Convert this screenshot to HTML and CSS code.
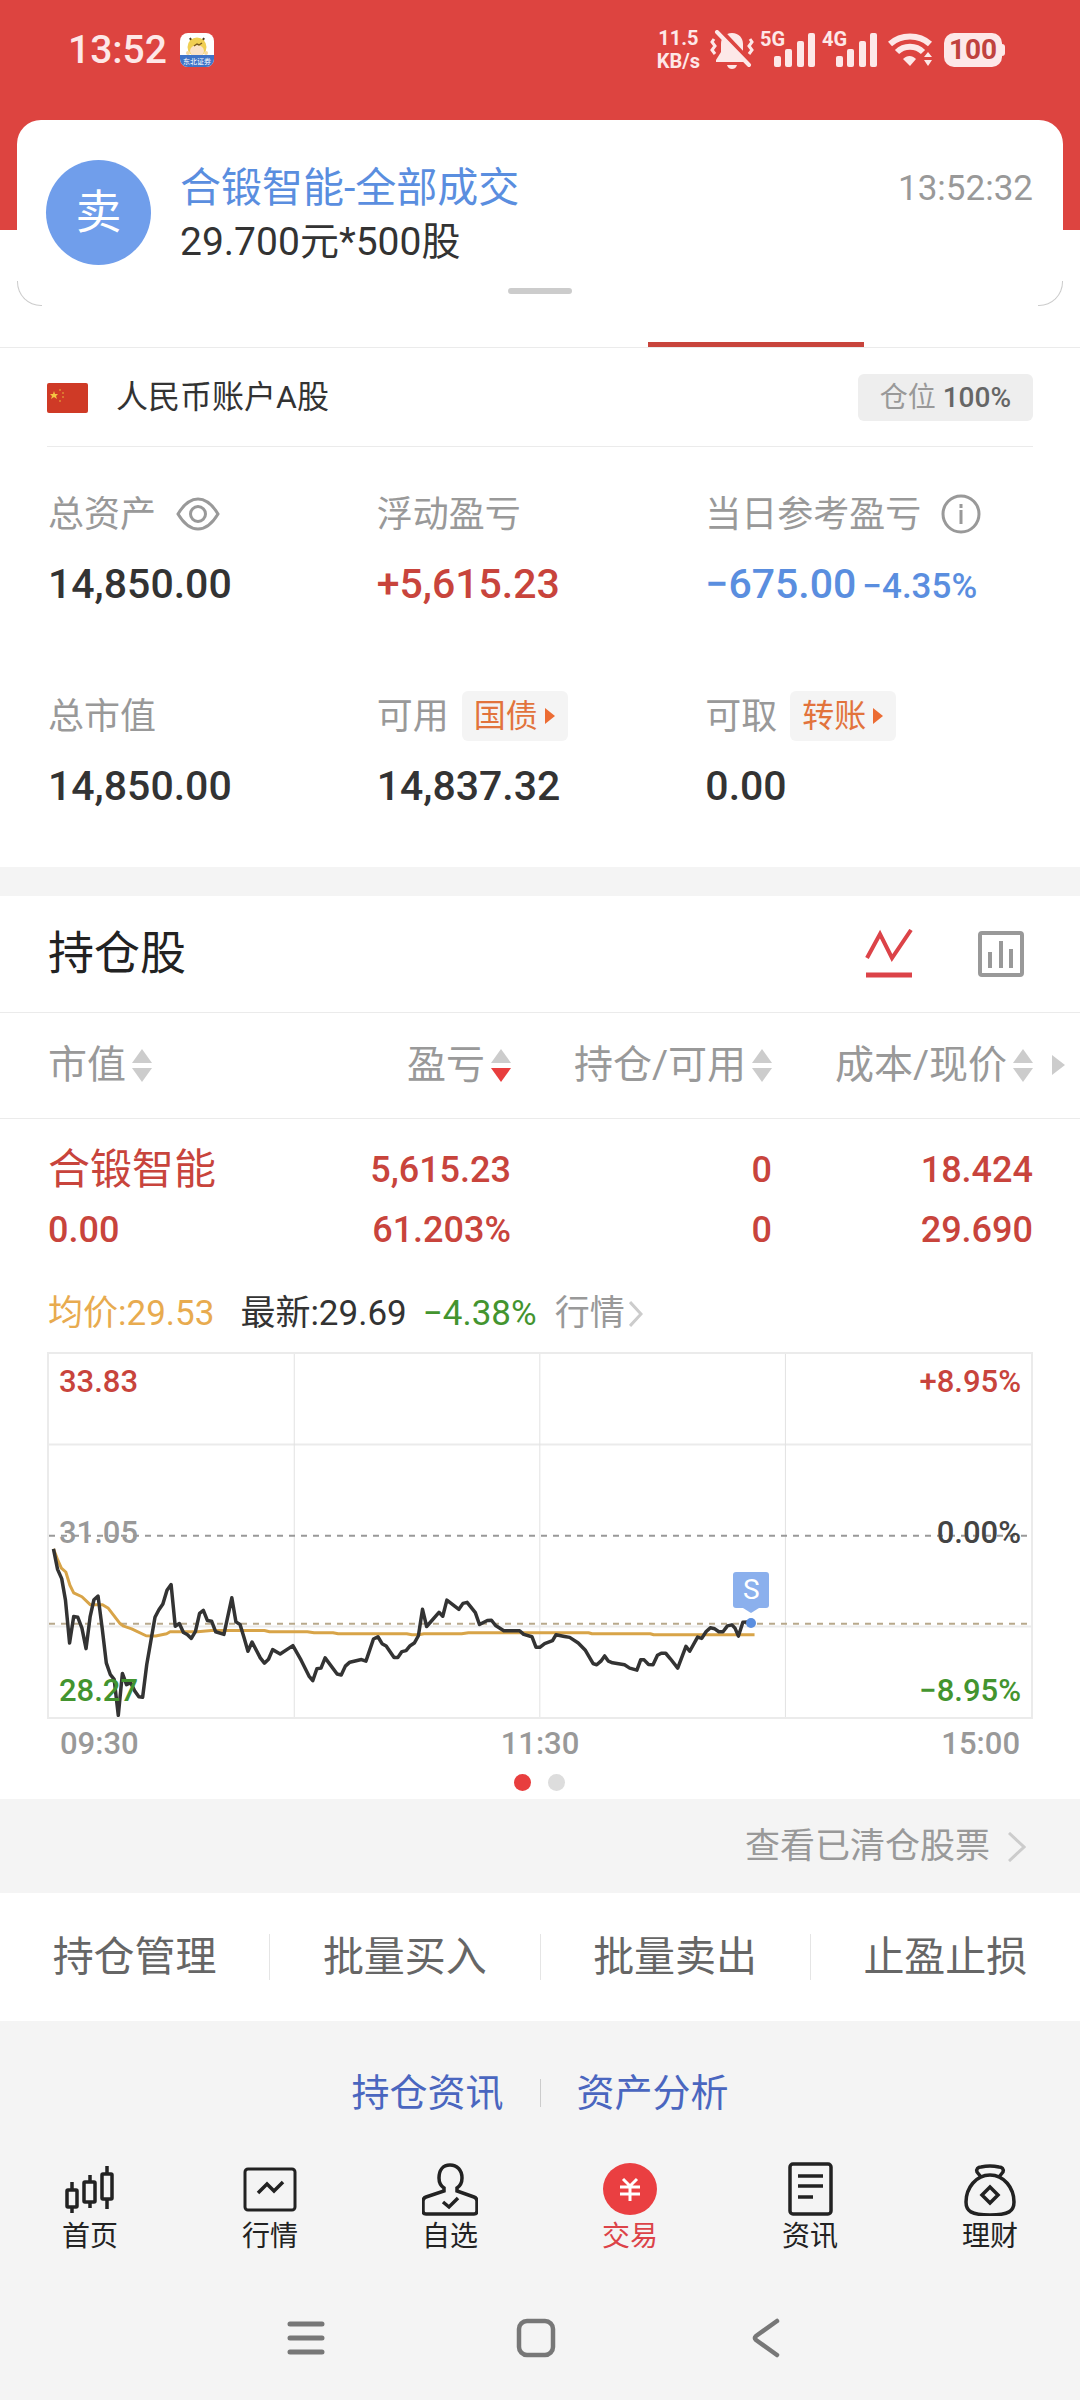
FILE: index.html
```html
<!DOCTYPE html>
<html lang="zh-CN">
<head>
  <meta charset="UTF-8">
  <meta name="viewport" content="width=device-width, initial-scale=1.0">
  <title>持仓</title>
  <link rel="stylesheet" href="styles.css">
</head>
<body>
  <header class="topbar">
    <div class="status">
      <span class="status-time">13:52</span>
      <svg class="app-icon" width="34" height="34" viewBox="0 0 34 34">
        <defs><clipPath id="app"><rect width="34" height="34" rx="8"/></clipPath></defs>
        <g clip-path="url(#app)">
          <rect width="34" height="34" fill="#fff"/>
          <path d="M10 5l2 4M24 5l-2 4" stroke="#4a3a20" stroke-width="2"/>
          <circle cx="17" cy="14" r="9.500" fill="#f0cf52"/>
          <ellipse cx="17" cy="18" rx="7" ry="6" fill="#fbe3c8"/>
          <path d="M14 13l3-2 2 1 3-2" stroke="#7a5a20" stroke-width="1.500" fill="none"/>
          <circle cx="8" cy="20" r="2" fill="#f6d9a0"/>
          <circle cx="26" cy="20" r="2" fill="#f6d9a0"/>
          <rect y="22" width="34" height="12" fill="#3f74c8"/>
          <text x="17" y="31" class="app-name">东北证券</text>
        </g>
      </svg>
      <div class="status-right">
        <span class="speed">11.5<br>KB/s</span>
        <svg width="44" height="40" viewBox="0 0 44 40" fill="#fde8e8">
          <path d="M22 3c-7 0-11 5-11 11v8l-5 8v2h32v-2l-5-8v-8c0-6-4-11-11-11z"/>
          <path d="M17 35h10c-1 3-3 4-5 4s-4-1-5-4z"/>
          <path d="M4 9l-2 3 3 4-3 4 3 4M40 9l2 3-3 4 3 4-3 4" fill="none" stroke="#fde8e8" stroke-width="3"/>
          <path d="M10 0l31 33" stroke="#dd4440" stroke-width="5"/>
          <path d="M7 2l32 33" stroke="#fde8e8" stroke-width="4" stroke-linecap="round"/>
        </svg>
        <span class="signal">
          <span class="signal-label">5G</span>
          <svg width="42" height="34" viewBox="0 0 42 34" fill="#fde8e8"><rect y="23" width="7" height="11" rx="2"/><rect x="11" y="16" width="7" height="18" rx="2"/><rect x="23" y="8" width="7" height="26" rx="2"/><rect x="34" width="7" height="34" rx="2"/></svg>
        </span>
        <span class="signal">
          <span class="signal-label">4G</span>
          <svg width="42" height="34" viewBox="0 0 42 34" fill="#fde8e8"><rect y="23" width="7" height="11" rx="2"/><rect x="11" y="16" width="7" height="18" rx="2"/><rect x="23" y="8" width="7" height="26" rx="2"/><rect x="34" width="7" height="34" rx="2"/></svg>
        </span>
        <svg class="wifi" width="46" height="34" viewBox="0 0 46 34" fill="none" stroke="#fde8e8" stroke-width="6">
          <path d="M2 11c11-10 29-10 40 0"/>
          <path d="M9 19c7-7 19-7 26 0"/>
          <path d="M15 26c4-4 9-4 13 0l-6 7z" fill="#fde8e8" stroke="none"/>
          <path d="M36 24l4-5 4 5zM36 27l4 6 4-6z" fill="#fde8e8" stroke="none"/>
        </svg>
        <span class="battery">100</span>
      </div>
    </div>
  </header>

  <section class="notice">
    <span class="notice-badge">卖</span>
    <div class="notice-body">
      <div class="notice-title">合锻智能-全部成交</div>
      <div class="notice-text">29.700元*500股</div>
    </div>
    <time class="notice-time">13:52:32</time>
    <span class="notice-handle"></span>
  </section>

  <nav class="tabs">
    <a href="#">买入</a>
    <a href="#">卖出</a>
    <a href="#">撤单</a>
    <a href="#" class="active">持仓</a>
    <a href="#">查询</a>
  </nav>

  <main>
    <section class="account">
      <svg width="41" height="30" viewBox="0 0 41 30">
        <rect width="41" height="30" rx="2" fill="#cf3a26"/>
        <path d="M7 8l1 3h3l-2 2 1 3-3-2-3 2 1-3-2-2h3z" fill="#f4c542"/>
        <g fill="#e08a35"><circle cx="13" cy="7" r="1"/><circle cx="16" cy="10" r="1"/><circle cx="16" cy="14" r="1"/><circle cx="13" cy="18" r="1"/></g>
      </svg>
      <span class="account-name">人民币账户A股</span>
      <span class="position">仓位 <b>100%</b></span>
    </section>

    <section class="assets">
      <div class="asset">
        <div class="asset-label"><span>总资产</span>
          <button class="icon-btn" aria-label="显示金额">
            <svg width="44" height="34" viewBox="0 0 44 34" fill="none" stroke="#999" stroke-width="3"><path d="M2 17C8 7 14 2 22 2s14 5 20 15c-6 10-12 15-20 15S8 27 2 17z"/><circle cx="22" cy="17" r="7.500"/></svg>
          </button>
        </div>
        <div class="asset-value">14,850.00</div>
      </div>
      <div class="asset">
        <div class="asset-label"><span>浮动盈亏</span></div>
        <div class="asset-value red">+5,615.23</div>
      </div>
      <div class="asset">
        <div class="asset-label"><span>当日参考盈亏</span>
          <button class="icon-btn" aria-label="说明">
            <svg width="40" height="40" viewBox="0 0 40 40" fill="none" stroke="#999" stroke-width="3"><circle cx="20" cy="20" r="18"/><path d="M20 16v14M20 10v4" stroke-width="3"/></svg>
          </button>
        </div>
        <div class="asset-value blue">−675.00<small>−4.35%</small></div>
      </div>
      <div class="asset">
        <div class="asset-label"><span>总市值</span></div>
        <div class="asset-value">14,850.00</div>
      </div>
      <div class="asset">
        <div class="asset-label"><span>可用</span> <button class="tag">国债<svg width="12" height="18" viewBox="0 0 12 18"><path d="M1 1l10 8-10 8z" fill="#ec6c33"/></svg></button></div>
        <div class="asset-value">14,837.32</div>
      </div>
      <div class="asset">
        <div class="asset-label"><span>可取</span> <button class="tag">转账<svg width="12" height="18" viewBox="0 0 12 18"><path d="M1 1l10 8-10 8z" fill="#ec6c33"/></svg></button></div>
        <div class="asset-value">0.00</div>
      </div>
    </section>

    <section class="holdings">
      <div class="holdings-head">
        <h2>持仓股</h2>
        <button class="icon-btn" aria-label="分时">
          <svg width="48" height="50" viewBox="0 0 48 50" fill="none" stroke="#dc4348" stroke-width="4"><path d="M2 29L15 5l12 24L46 1"/><path d="M1 46h46" stroke-width="5"/></svg>
        </button>
        <button class="icon-btn" aria-label="柱状图">
          <svg width="48" height="48" viewBox="0 0 48 48" fill="none" stroke="#999" stroke-width="4"><rect x="3" y="3" width="42" height="42" rx="2"/><path d="M13 22v16M24 11v27M34 19v19"/></svg>
        </button>
      </div>

      <table class="stocks">
        <thead>
          <tr>
            <th><button class="sort">市值<svg width="20" height="33" viewBox="0 0 20 33"><path class="up" d="M10 0l10 14H0z"/><path class="down" d="M10 33L0 19h20z"/></svg></button></th>
            <th><button class="sort desc">盈亏<svg width="20" height="33" viewBox="0 0 20 33"><path class="up" d="M10 0l10 14H0z"/><path class="down" d="M10 33L0 19h20z"/></svg></button></th>
            <th><button class="sort">持仓/可用<svg width="20" height="33" viewBox="0 0 20 33"><path class="up" d="M10 0l10 14H0z"/><path class="down" d="M10 33L0 19h20z"/></svg></button></th>
            <th><button class="sort">成本/现价<svg width="20" height="33" viewBox="0 0 20 33"><path class="up" d="M10 0l10 14H0z"/><path class="down" d="M10 33L0 19h20z"/></svg></button><span class="more"></span></th>
          </tr>
        </thead>
        <tbody>
          <tr>
            <td><div class="stock-name">合锻智能</div><div>0.00</div></td>
            <td><div>5,615.23</div><div>61.203%</div></td>
            <td><div>0</div><div>0</div></td>
            <td><div>18.424</div><div>29.690</div></td>
          </tr>
        </tbody>
      </table>

      <div class="quote">
        <span class="avg">均价:29.53</span>
        <span class="last">最新:29.69</span>
        <span class="change">−4.38%</span>
        <a href="#">行情<svg width="14" height="26" viewBox="0 0 14 26" fill="none" stroke="#ccc" stroke-width="3"><path d="M1 1l11 12L1 25"/></svg></a>
      </div>

      <div class="chart">
        <svg class="plot" viewBox="137 65 2863 1099" preserveAspectRatio="none">
          <!-- grid -->
          <g stroke="#ebebeb" stroke-width="2">
            <path d="M137 339h2863M137 890h2863"/>
            <path d="M852 65v1099M1568 65v1099M2284 65v1099" stroke="#e2e2e2" stroke-width="1"/>
          </g>
          <path d="M137 615h2863" stroke="#999" stroke-width="2" stroke-dasharray="6 6"/>
          <path d="M137 882h2863" stroke="#b8a98c" stroke-width="2" stroke-dasharray="6 6"/>
          <!-- average -->
          <path stroke="#d8a448" stroke-width="3" d="M150 655L163 690L173 713L186 725L198 765L209 788L233 800L257 824L293 824L310 835L343 880L355 889L378 897L420 918L448 919L480 912L490 906L570 906L610 902L765 902L780 906L890 906L910 909L965 909L980 912L1180 912L1195 915L1215 915L1230 912L1340 912L1360 909L1710 909L1720 912L1890 912L1900 915L2194 915"/>
          <!-- price -->
          <path stroke="#333" stroke-width="3.500" d="M150 655L162 717L174 745L185 810L197 940L209 860L221 862L233 895L245 957L257 860L268 809L280 798L292 895L304 1000L316 1036L327 1050L339 1159L351 1032L363 1066L375 1060L387 1085L399 1103L410 1104L422 1005L446 862L457 840L469 822L481 780L493 763L505 889L517 881L529 908L540 914L552 926L564 905L576 850L587 841L599 872L611 874L623 906L647 914L670 803L682 876L694 884L706 925L717 965L729 937L753 985L765 1001L777 989L789 960L811 973L848 948L872 992L895 1040L906 1054L918 1018L930 1016L942 985L977 1034L989 1037L1001 1010L1014 998L1048 990L1061 995L1083 928L1096 921L1108 942L1120 949L1143 984L1154 984L1166 966L1178 963L1190 948L1202 940L1214 918L1226 838L1238 890L1274 847L1285 859L1297 810L1332 838L1344 820L1356 817L1380 848L1392 884L1415 872L1427 871L1439 887L1463 903L1509 903L1521 914L1545 921L1557 953L1568 953L1582 942L1605 933L1615 915L1640 920L1655 923L1680 940L1700 961L1723 1002L1734 1006L1746 995L1757 979L1768 995L1780 1000L1815 1006L1830 1016L1851 1022L1862 991L1872 991L1885 1005L1898 1006L1911 977L1922 971L1935 971L1948 987L1970 1016L1994 950L2005 965L2028 922L2040 926L2053 905L2065 894L2078 897L2090 906L2102 906L2115 888L2128 885L2137 895L2147 919L2160 877L2178 876"/>
        </svg>
        <span class="mark top red">33.83</span>
        <span class="mark mid gray">31.05</span>
        <span class="mark low green">28.27</span>
        <span class="mark right top red">+8.95%</span>
        <span class="mark right mid">0.00%</span>
        <span class="mark right low green">−8.95%</span>
        <span class="trade">S</span>
        <span class="trade-dot"></span>
      </div>
      <div class="axis"><span>09:30</span><span>11:30</span><span>15:00</span></div>
      <div class="pager"><i class="on"></i><i></i></div>
    </section>

    <a class="cleared" href="#">查看已清仓股票<svg width="18" height="30" viewBox="0 0 18 30" fill="none" stroke="#ccc" stroke-width="3"><path d="M1 1l15 14L1 29"/></svg></a>

    <div class="actions">
      <button>持仓管理</button>
      <button>批量买入</button>
      <button>批量卖出</button>
      <button>止盈止损</button>
    </div>

    <div class="links">
      <a href="#">持仓资讯</a>
      <a href="#">资产分析</a>
    </div>
  </main>

  <nav class="bottom-nav">
    <a href="#">
      <svg width="56" height="56" viewBox="0 0 56 56" fill="none" stroke="#222" stroke-width="3.500"><rect x="5" y="30" width="10" height="17" rx="1"/><path d="M10 22v8M10 47v6"/><rect x="22" y="22" width="11" height="20" rx="1"/><path d="M28 15v7M28 42v6"/><rect x="40" y="14" width="10" height="25" rx="1"/><path d="M45 6v8M45 39v10"/></svg>
      首页
    </a>
    <a href="#">
      <svg width="56" height="56" viewBox="0 0 56 56" fill="none" stroke="#222" stroke-width="3"><rect x="3" y="9" width="50" height="41" rx="3"/><path d="M16 33l9-9 7 7 9-9" stroke-width="3.500"/></svg>
      行情
    </a>
    <a href="#">
      <svg width="56" height="56" viewBox="0 0 56 56" fill="none" stroke="#222" stroke-width="3.500"><path d="M22 31v-3c-3-2-5-6-5-10 0-8 4-13 11-13s12 5 12 13c0 4-2 8-5 10v3l17 6q3 1 3 4v10q0 3-3 3H4q-3 0-3-3V41q0-3 3-4z"/><path d="M21 42l6 5 9-9"/></svg>
      自选
    </a>
    <a href="#" class="active">
      <svg width="56" height="56" viewBox="0 0 56 56" fill="none" stroke="#fff" stroke-width="3"><ellipse cx="28" cy="29" rx="27" ry="26" fill="#ea3f41" stroke="none"/><path d="M21 19l7 7 7-7M28 26v15M18 27h20M18 34h20"/></svg>
      交易
    </a>
    <a href="#">
      <svg width="56" height="56" viewBox="0 0 56 56" fill="none" stroke="#222" stroke-width="3.500"><rect x="8" y="4" width="41" height="50" rx="3"/><path d="M16 16h25M16 26h25M16 37h15"/></svg>
      资讯
    </a>
    <a href="#">
      <svg width="56" height="56" viewBox="0 0 56 56" fill="none" stroke="#222" stroke-width="3.500"><path d="M19 17l-4-5c-1-3 1-5 4-5q9-2 18 0c3 0 5 2 4 5l-4 5"/><path d="M28 15c-14 0-24 13-24 27 0 9 5 13 24 13s24-4 24-13c0-14-10-27-24-27z"/><path d="M28 27l8 8-8 8-8-8z"/></svg>
      理财
    </a>
  </nav>

  <div class="system-nav">
    <button aria-label="最近任务"><svg width="40" height="40" viewBox="0 0 40 40" fill="none" stroke="#777" stroke-width="5" stroke-linecap="round"><path d="M4 6h32M4 20h32M4 34h32"/></svg></button>
    <button aria-label="主屏幕"><svg width="40" height="40" viewBox="0 0 40 40" fill="none" stroke="#777" stroke-width="4.500"><rect x="3" y="3" width="34" height="34" rx="8"/></svg></button>
    <button aria-label="返回"><svg width="40" height="40" viewBox="0 0 40 40" fill="none" stroke="#777" stroke-width="4.500" stroke-linecap="round" stroke-linejoin="round"><path d="M31 3L10 18q-2 2 0 4l21 15"/></svg></button>
  </div>
</body>
</html>
```
FILE: styles.css
```css
* {
  box-sizing: border-box;
}

body {
  margin: 0;
  position: relative;
  background-color: #f4f4f4;
  color: #333;
  font-family: Roboto, "Noto Sans CJK SC", sans-serif;
  font-size: 36px;
  line-height: 1.2;
}

a {
  color: inherit;
  text-decoration: none;
}

button {
  padding: 0;
  border: 0;
  background: none;
  color: inherit;
  font: inherit;
}

svg {
  display: block;
  flex: none;
}

.red { color: #c8443c; }
.blue { color: #5a8edf; }
.green { color: #43942f; }
.gray { color: #999; }

/* status bar */

.topbar {
  height: 230px;
  background-color: #dd4440;
}

.status {
  display: flex;
  align-items: center;
  height: 100px;
  padding: 0 78px 0 68px;
  color: #fde8e8;
}

.status-time {
  font-size: 39px;
  font-weight: 500;
}

.app-icon {
  margin-left: 13px;
}

.app-name {
  fill: #fff;
  font-size: 7px;
  text-anchor: middle;
}

.status-right {
  display: flex;
  align-items: center;
  gap: 10px;
  margin-left: auto;
}

.speed {
  font-size: 20px;
  font-weight: 700;
  line-height: 23px;
  text-align: center;
}

.signal {
  position: relative;
  padding-left: 10px;
}

.signal-label {
  position: absolute;
  left: -4px;
  top: -4px;
  font-size: 20px;
  font-weight: 700;
  line-height: 20px;
}

.battery {
  position: relative;
  width: 58px;
  height: 34px;
  border-radius: 10px;
  background-color: #fde8e8;
  color: #c0423e;
  font-size: 28px;
  font-weight: 700;
  line-height: 34px;
  text-align: center;
}

.battery::after {
  content: "";
  position: absolute;
  left: 58px;
  top: 11px;
  width: 3px;
  height: 12px;
  border-radius: 0 3px 3px 0;
  background-color: #fde8e8;
}

/* notification */

.notice {
  position: absolute;
  z-index: 1;
  top: 120px;
  left: 17px;
  right: 17px;
  display: flex;
  height: 186px;
  padding: 40px 30px 0 29px;
  border-radius: 24px;
  background-color: #fff;
}

.notice::before,
.notice::after {
  content: "";
  position: absolute;
  bottom: 0;
  width: 24px;
  height: 24px;
  border-bottom: 1px solid #ccc;
}

.notice::before {
  left: 0;
  border-left: 1px solid #ccc;
  border-bottom-left-radius: 24px;
}

.notice::after {
  right: 0;
  border-right: 1px solid #ccc;
  border-bottom-right-radius: 24px;
}

.notice-badge {
  width: 105px;
  height: 105px;
  border-radius: 50%;
  background-color: #709eeb;
  color: #fff;
  font-size: 46px;
  line-height: 105px;
  text-align: center;
}

.notice-body {
  margin-left: 29px;
  padding-top: 1px;
}

.notice-title {
  color: #5a8edf;
  font-size: 41px;
  line-height: 54px;
}

.notice-text {
  font-size: 39px;
  line-height: 54px;
}

.notice-time {
  margin-left: auto;
  color: #999;
  font-size: 35px;
  line-height: 57px;
}

.notice-handle {
  position: absolute;
  left: 50%;
  bottom: 12px;
  width: 64px;
  height: 6px;
  margin-left: -32px;
  border-radius: 3px;
  background-color: #ccc;
}

/* trade tabs */

.tabs {
  display: flex;
  height: 118px;
  border-bottom: 1px solid #ebebeb;
  background-color: #fff;
}

.tabs a {
  flex: 1;
  border-bottom: 5px solid transparent;
  font-size: 39px;
  line-height: 118px;
  text-align: center;
}

.tabs .active {
  border-color: #c8443c;
  color: #c8443c;
}

/* account */

.account {
  display: flex;
  align-items: center;
  height: 99px;
  padding: 0 47px;
  background: linear-gradient(#ebebeb, #ebebeb) 50% 100% / calc(100% - 94px) 1px no-repeat #fff;
}

.account-name {
  margin-left: 28px;
  font-size: 32px;
}

.position {
  margin-left: auto;
  padding: 0 22px;
  border-radius: 6px;
  background-color: #eee;
  color: #999;
  font-size: 28px;
  line-height: 47px;
}

.position b {
  color: #666;
  font-weight: 500;
}

.assets {
  display: grid;
  grid-template-columns: repeat(3, 1fr);
  row-gap: 77px;
  padding: 42px 46px 51px 48px;
  background-color: #fff;
}

.asset-label {
  display: flex;
  align-items: center;
  height: 50px;
  color: #999;
}

.asset-label span {
  padding-top: 4px;
}

.asset-label .icon-btn {
  margin-left: 20px;
}

.tag {
  display: flex;
  align-items: center;
  gap: 6px;
  height: 50px;
  margin-left: 13px;
  padding: 0 12px;
  border-radius: 6px;
  background-color: #f4f4f4;
  color: #e2733c;
  font-size: 32px;
}

.asset-value {
  margin-top: 15px;
  font-size: 41px;
  font-weight: 500;
  line-height: 60px;
}

.asset-value small {
  margin-left: 6px;
  font-size: 35px;
  line-height: 1;
}

/* holdings */

.holdings {
  margin-top: 29px;
  background-color: #fff;
}

.holdings-head {
  display: flex;
  align-items: center;
  gap: 64px;
  height: 117px;
  padding: 0 55px 0 48px;
  border-bottom: 1px solid #ebebeb;
}

.holdings-head h2 {
  flex: 1;
  margin: 0;
  color: #222;
  font-size: 46px;
  font-weight: 400;
}

.stocks {
  width: 100%;
  border-collapse: collapse;
  table-layout: fixed;
}

.stocks th,
.stocks td {
  padding: 0;
  text-align: right;
}

.stocks th {
  position: relative;
  height: 105px;
  border-bottom: 1px solid #ebebeb;
  color: #999;
  font-weight: 400;
}

.stocks th:first-child,
.stocks td:first-child {
  width: 250px;
  padding-left: 48px;
  text-align: left;
}

.stocks th:last-child,
.stocks td:last-child {
  width: 308px;
  padding-right: 47px;
}

.sort {
  display: inline-flex;
  align-items: center;
  gap: 6px;
  font-size: 39px;
  vertical-align: middle;
}

.sort path {
  fill: #ccc;
}

.sort.desc .down {
  fill: #e83e3e;
}

.more {
  position: absolute;
  right: 15px;
  top: 42px;
  border: 10px solid transparent;
  border-left: 13px solid #ccc;
  border-right: 0;
}

.stocks td {
  padding-top: 21px;
  color: #c8443c;
  font-size: 36px;
  font-weight: 500;
  line-height: 60px;
}

.stocks .stock-name {
  font-size: 42px;
  font-weight: 400;
}

.quote {
  display: flex;
  margin-top: 29px;
  padding: 0 48px;
  font-size: 35px;
  line-height: 50px;
}

.quote .avg {
  margin-right: 26px;
  color: #e8ab4f;
}

.quote .last {
  margin-right: 16px;
}

.quote .change {
  margin-right: 18px;
  color: #43942f;
}

.quote a {
  display: flex;
  align-items: center;
  gap: 4px;
  color: #999;
}

.chart {
  position: relative;
  height: 367px;
  margin: 13px 47px 0;
  border: 2px solid #ebebeb;
}

.plot {
  width: 100%;
  height: 100%;
  fill: none;
  stroke-linejoin: round;
}

.plot path {
  vector-effect: non-scaling-stroke;
}

.mark {
  position: absolute;
  left: 10px;
  color: #444;
  font-size: 31px;
  font-weight: 500;
  line-height: 40px;
}

.mark.right { left: auto; right: 10px; }
.mark.top { top: 8px; }
.mark.mid { top: 159px; }
.mark.low { bottom: 6px; }
.mark.red { color: #c8443c; }
.mark.green { color: #43942f; }
.mark.gray { color: #999; }

/* sell marker, sits on the last trade */
.trade {
  position: absolute;
  left: 71%;
  top: 218px;
  width: 36px;
  height: 36px;
  margin-left: -13px;
  border-radius: 3px;
  background-color: #8bb0ed;
  color: #fff;
  font-size: 28px;
  line-height: 36px;
  text-align: center;
}

.trade::after {
  content: "";
  position: absolute;
  left: 10px;
  top: 36px;
  border: 8px solid transparent;
  border-top: 5px solid #8bb0ed;
  border-bottom: 0;
}

.trade-dot {
  position: absolute;
  left: 71%;
  top: 264px;
  width: 10px;
  height: 10px;
  border-radius: 50%;
  background-color: #5a8edf;
}

.axis {
  display: flex;
  justify-content: space-between;
  padding: 0 60px;
  color: #999;
  font-size: 31px;
  font-weight: 500;
  line-height: 50px;
}

.pager {
  display: flex;
  justify-content: center;
  gap: 17px;
  height: 30px;
  padding: 5px 2px 0 0;
}

.pager i {
  width: 17px;
  height: 17px;
  border-radius: 50%;
  background-color: #ddd;
}

.pager .on {
  background-color: #e83e3e;
}

.cleared {
  display: flex;
  align-items: center;
  justify-content: flex-end;
  gap: 18px;
  height: 94px;
  padding: 2px 54px 0;
  color: #999;
  font-size: 35px;
}

.actions {
  display: flex;
  align-items: center;
  height: 128px;
  background-color: #fff;
}

.actions button {
  flex: 1;
  height: 46px;
  color: #666;
  font-size: 41px;
  line-height: 46px;
}

.actions button + button {
  border-left: 1px solid #e5e5e5;
}

.links {
  display: flex;
  justify-content: center;
  align-items: center;
  height: 139px;
  padding-top: 6px;
  color: #4a66bf;
  font-size: 38px;
}

.links a {
  padding: 0 36px;
  line-height: 28px;
}

.links a + a {
  border-left: 1px solid #ccc;
}

/* bottom bars */

.bottom-nav {
  display: flex;
}

.bottom-nav a {
  display: flex;
  flex: 1;
  flex-direction: column;
  align-items: center;
  color: #222;
  font-size: 28px;
  line-height: 42px;
}

.bottom-nav .active {
  color: #dc4348;
}

.system-nav {
  display: flex;
  justify-content: center;
  gap: 190px;
  padding: 60px 8px 40px 0;
}
```
